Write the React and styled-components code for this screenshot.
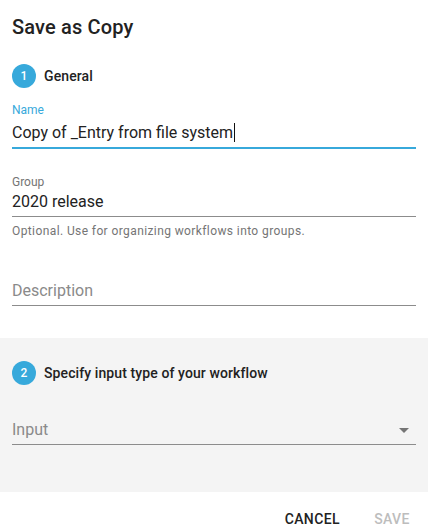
import React from 'react';
import styled, { createGlobalStyle } from 'styled-components';

const Global = createGlobalStyle`
  body {
    margin: 0;
    background: #fff;
    font-family: Roboto, "Liberation Sans", sans-serif;
    color: rgba(0, 0, 0, 0.87);
  }
`

const Dialog = styled.div`
  width: 428px;
  height: 532px;
  display: flex;
  flex-direction: column;
`

const Title = styled.h2`
  margin: 0;
  padding: 15px 12px 0;
  font-size: 20px;
  line-height: 24px;
  font-weight: 500;
  letter-spacing: 0.15px;
  color: #222;
`

const Section = styled.div`
  margin-top: ${p => p.top || 0}px;
  padding: ${p => p.pad};
  background: ${p => p.shade ? '#f4f4f4' : '#fff'};
  display: flex;
  flex-direction: column;
`

const StepHead = styled.div`
  display: flex;
  align-items: center;
  gap: 8px;
  height: 24px;
`

const Circle = styled.span`
  width: 24px;
  height: 24px;
  border-radius: 50%;
  background: #37a9db;
  color: #fff;
  font-size: 12px;
  font-weight: 500;
  display: flex;
  align-items: center;
  justify-content: center;
`

const StepLabel = styled.span`
  font-size: 14px;
  font-weight: 500;
  letter-spacing: 0.1px;
  color: #222;
`

const Field = styled.div`
  margin-top: ${p => p.top}px;
  display: flex;
  flex-direction: column;
`

const Label = styled.label`
  font-size: 12px;
  line-height: 14px;
  margin-bottom: ${p => p.gap}px;
  color: ${p => p.focused ? '#37a9db' : '#757575'};
`

const InputRow = styled.div`
  display: flex;
  align-items: flex-start;
  height: 24px;
  padding-top: 4px;
  line-height: 19px;
  border-bottom: ${p => p.focused ? '2px solid #37a9db' : '1px solid #8c8c8c'};
  font-size: 16px;
  color: ${p => p.placeholder ? '#8a8a8a' : '#222'};
`

const Caret = styled.span`
  display: inline-block;
  width: 1px;
  height: 19px;
  background: #111;
  margin-left: 1px;
`

const Grow = styled.span`
  flex: 1;
`

const Helper = styled.div`
  margin-top: 7px;
  font-size: 12px;
  line-height: 14px;
  color: #757575;
  letter-spacing: 0.4px;
`

const Actions = styled.div`
  display: flex;
  justify-content: flex-end;
  align-items: center;
  gap: 12px;
  padding: 9px 4px 0;
`

const Button = styled.button`
  border: none;
  background: none;
  font-family: inherit;
  font-size: 14px;
  font-weight: 500;
  text-transform: uppercase;
  letter-spacing: 0.4px;
  min-width: 64px;
  height: 36px;
  padding: 0 8px;
  color: ${p => p.disabled ? '#bdbdbd' : '#222'};
`

const ArrowIcon = styled.svg`
  margin-top: -2px;
`

const Arrow = () => (
  <ArrowIcon width="24" height="24" viewBox="0 0 24 24">
    <path d="M7 10l5 5 5-5z" fill="#757575" />
  </ArrowIcon>
)

export default function App() {
  return (
    <Dialog>
      <Global />
      <Title>Save as Copy</Title>
      <Section pad="25px 12px 0">
        <StepHead>
          <Circle>1</Circle>
          <StepLabel>General</StepLabel>
        </StepHead>
        <Field top={15}>
          <Label focused gap={2}>Name</Label>
          <InputRow focused>
            Copy of _Entry from file system<Caret />
          </InputRow>
        </Field>
        <Field top={26}>
          <Label gap={-1}>Group</Label>
          <InputRow>2020 release</InputRow>
          <Helper>Optional. Use for organizing workflows into groups.</Helper>
        </Field>
        <Field top={39}>
          <InputRow placeholder>Description</InputRow>
        </Field>
      </Section>
      <Section shade top={32} pad="23px 12px 47px">
        <StepHead>
          <Circle>2</Circle>
          <StepLabel>Specify input type of your workflow</StepLabel>
        </StepHead>
        <Field top={31}>
          <InputRow placeholder>
            <Grow>Input</Grow>
            <Arrow />
          </InputRow>
        </Field>
      </Section>
      <Actions>
        <Button>Cancel</Button>
        <Button disabled>Save</Button>
      </Actions>
    </Dialog>
  );
}
